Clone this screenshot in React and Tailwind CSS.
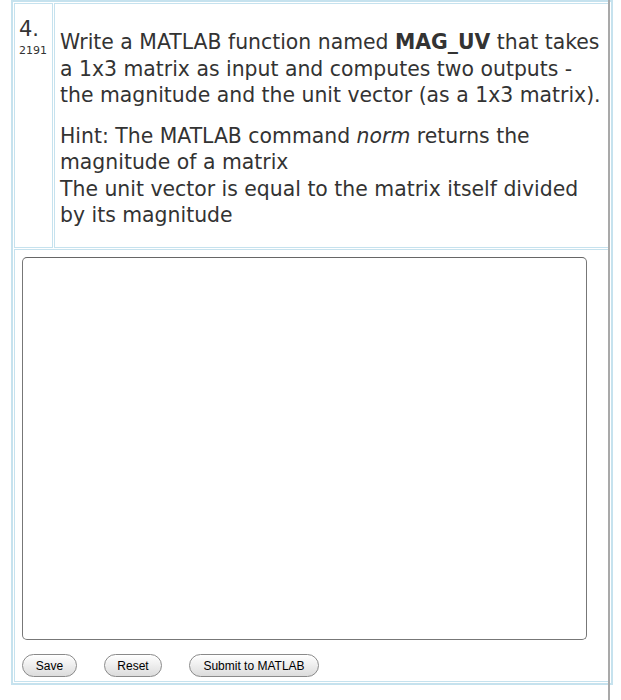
import React from 'react';

const font = { fontFamily: '"DejaVu Sans", Verdana, sans-serif' };

const PillButton = ({ children, className = '' }) => (
  <button
    className={`h-[23px] rounded-full border border-[#8a8a8a] bg-gradient-to-b from-white to-[#dcdcdc] text-[12px] text-black font-['Liberation_Sans',Arial,sans-serif] shadow-[inset_0_1px_0_#fff] ${className}`}
  >
    {children}
  </button>
);

export default function App() {
  return (
    <div className="relative w-[621px] h-[700px] bg-white overflow-hidden">
      {/* gray page edge on the right */}
      <div className="absolute left-[608px] top-0 w-[2px] h-[700px] bg-[#a9a9a9]" />

      <div className="ml-[11px] w-[602px] border-2 border-[#c6e2ee] p-px text-[#333]" style={font}>
        {/* question row */}
        <div className="flex h-[245px] gap-px">
          <div className="w-[39px] border border-[#c6e2ee] pl-[4px] pt-[12px]">
            <div className="text-[21px] leading-[26px]">4.</div>
            <div className="mt-[2px] text-[11px] leading-[13px]">2191</div>
          </div>
          <div className="flex-1 border border-[#c6e2ee] pl-[5px] pr-[2px] pt-[25px] text-[20.4px] leading-[26.5px]">
            <p>
              Write a MATLAB function named <b>MAG_UV</b> that takes a 1x3 matrix as input and computes two outputs - the magnitude and the unit vector (as a 1x3 matrix).
            </p>
            <p className="mt-[14px]">
              Hint: The MATLAB command <i>norm</i> returns the magnitude of a matrix
              <br />
              The unit vector is equal to the matrix itself divided by its magnitude
            </p>
          </div>
        </div>

        {/* answer row */}
        <div className="mt-px h-[433px] border border-[#c6e2ee] pl-[7px] pt-[7px]">
          <textarea className="block w-[565px] h-[383px] resize-none rounded-[5px] border border-[#777] border-t-[#666] bg-white outline-none" />
          <div className="mt-[14px] flex gap-[27px]">
            <PillButton className="w-[55px]">Save</PillButton>
            <PillButton className="w-[58px]">Reset</PillButton>
            <PillButton className="w-[130px]">Submit to MATLAB</PillButton>
          </div>
        </div>
      </div>
    </div>
  );
}
